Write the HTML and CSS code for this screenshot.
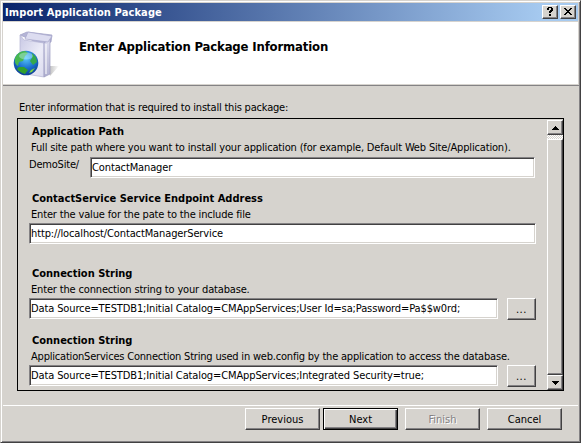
FILE: index.html
```html
<!DOCTYPE html>
<html lang="en">
<head>
<meta charset="utf-8">
<title>Import Application Package</title>
<link rel="stylesheet" href="styles.css">
</head>
<body>
<div class="window">
  <header class="titlebar">
    <span class="title">Import Application Package</span>
    <button class="caption" aria-label="Help"><svg width="12" height="10" viewBox="0 0 12 10" shape-rendering="crispEdges"><path d="M4 0h4v1h1v3h-1v1h-1v1h-2v-2h1v-1h1v-2h-2v2h-2v-2h1zM5 7h2v2h-2z"/></svg></button>
    <button class="caption close" aria-label="Close"><svg width="12" height="10" viewBox="0 0 12 10" shape-rendering="crispEdges"><path d="M2 1h2v1h1v1h2v-1h1v-1h2v1h-1v1h-1v1h-1v1h1v1h1v1h1v1h-2v-1h-1v-1h-2v1h-1v1h-2v-1h1v-1h1v-1h1v-1h-1v-1h-1v-1h-1z"/></svg></button>
  </header>
  <div class="banner">
    <svg class="logo" width="48" height="50" viewBox="0 0 48 50">
      <defs>
        <linearGradient id="front" x1="0" y1="0" x2="1" y2="1"><stop offset="0" stop-color="#c8c8e4"/><stop offset=".6" stop-color="#ececf8"/><stop offset="1" stop-color="#dadaee"/></linearGradient>
        <linearGradient id="side" x1="0" y1="0" x2="0" y2="1"><stop offset="0" stop-color="#dedef0"/><stop offset="1" stop-color="#b0b0d0"/></linearGradient>
        <radialGradient id="sea" cx=".5" cy=".3" r=".75"><stop offset="0" stop-color="#58c8f8"/><stop offset=".55" stop-color="#1b6fce"/><stop offset="1" stop-color="#0b3588"/></radialGradient>
        <linearGradient id="shade"><stop offset="0" stop-color="#999" stop-opacity=".7"/><stop offset="1" stop-color="#999" stop-opacity="0"/></linearGradient>
      </defs>
      <path d="M37 45L46 35L35 35Z" fill="url(#shade)"/>
      <path d="M7 4L14 1L39 4L38 11L30 14Z" fill="#b4b4d6" stroke="#a0a0c6" stroke-width=".7"/>
      <path d="M7 4L11 9L31 12V46L7 42Z" fill="url(#front)" stroke="#b4b4d4" stroke-width=".7"/>
      <path d="M31 12L37 8V43L31 46Z" fill="url(#side)" stroke="#9c9cc0" stroke-width=".7"/>
      <path d="M15 1L39 5L35 11L12 8Z" fill="#dcdcf0" stroke="#a8a8cc" stroke-width=".7"/>
      <path d="M33 13v30" stroke="#fff" stroke-width="1.500" opacity=".7"/>
      <circle cx="13" cy="32" r="12.300" fill="url(#sea)"/>
      <path d="M2 27Q5 20 12 20L15 22L12 25L10 30L6 31L5 35Q1 33 2 27Z" fill="#48b850"/>
      <path d="M6 36L11 36L15 39L12 43Q6 41 4 38Z" fill="#32a02c"/>
      <path d="M19 22L23 26L24 31L20 34L17 30L19 27Z" fill="#35a84c"/>
      <path d="M18 39L22 37L19 41L16 42Z" fill="#7bd440"/>
      <ellipse cx="13" cy="25" rx="7" ry="3.500" fill="#c8f4ff" opacity=".4"/>
    </svg>
    <h1>Enter Application Package Information</h1>
  </div>
  <main class="content">
    <p class="intro">Enter information that is required to install this package:</p>
    <div class="panel">
      <div class="fields">
        <section class="field">
          <h2>Application Path</h2>
          <p>Full site path where you want to install your application (for example, Default Web Site/Application).</p>
          <div class="row path-row"><label>DemoSite/</label><div class="input">ContactManager</div></div>
        </section>
        <section class="field endpoint">
          <h2>ContactService Service Endpoint Address</h2>
          <p>Enter the value for the pate to the include file</p>
          <div class="row"><div class="input">http://localhost/ContactManagerService</div></div>
        </section>
        <section class="field">
          <h2>Connection String</h2>
          <p>Enter the connection string to your database.</p>
          <div class="row"><div class="input">Data Source=TESTDB1;Initial Catalog=CMAppServices;User Id=sa;Password=Pa$$w0rd;</div><button class="btn more">...</button></div>
        </section>
        <section class="field">
          <h2>Connection String</h2>
          <p class="tight">ApplicationServices Connection String used in web.config by the application to access the database.</p>
          <div class="row"><div class="input">Data Source=TESTDB1;Initial Catalog=CMAppServices;Integrated Security=true;</div><button class="btn more">...</button></div>
        </section>
      </div>
      <div class="scrollbar">
        <div class="arrow"><svg width="7" height="4" viewBox="0 0 7 4" shape-rendering="crispEdges"><path d="M3 0h1v1h1v1h1v1h1v1H0v-1h1v-1h1v-1h1z"/></svg></div>
        <div class="track"></div>
        <div class="thumb"></div>
        <div class="arrow"><svg width="7" height="4" viewBox="0 0 7 4" shape-rendering="crispEdges"><path d="M0 0h7v1h-1v1h-1v1h-1v1h-1v-1h-1v-1h-1v-1h-1z"/></svg></div>
      </div>
    </div>
  </main>
  <footer class="footer">
    <button class="btn">Previous</button>
    <button class="btn default">Next</button>
    <button class="btn disabled" disabled>Finish</button>
    <button class="btn">Cancel</button>
  </footer>
</div>
</body>
</html>
```
FILE: styles.css
```css
* { box-sizing: border-box; }

body {
  margin: 0;
  font: 11px/16px "DejaVu Sans Condensed", "DejaVu Sans", sans-serif;
  color: #000;
  background: #d6d3ce;
}

h1, h2, p { margin: 0; white-space: nowrap; }

.window {
  display: flex;
  flex-direction: column;
  width: 581px;
  height: 443px;
  padding: 2px 1px 1px 2px;
  background: #d6d3ce;
  border: 1px solid;
  border-color: #d6d3ce #424142 #424142 #d6d3ce;
  box-shadow: inset 1px 1px #fff, inset -1px -1px #848284;
}

.titlebar {
  display: flex;
  align-items: center;
  width: 575px;
  height: 18px;
  padding: 0 2px;
  background: linear-gradient(90deg, #0a246a, #a6caf0 94%);
}

.title {
  flex: 1;
  padding-top: 1px;
  font-weight: bold;
  color: #fff;
  letter-spacing: .11px;
  white-space: nowrap;
}

.caption {
  display: flex;
  justify-content: center;
  align-items: center;
  width: 16px;
  height: 14px;
  padding: 0;
  background: #d6d3ce;
  border: 1px solid;
  border-color: #fff #424142 #424142 #fff;
  box-shadow: inset -1px -1px #848284;
}

.close { margin-left: 2px; }

.banner {
  display: flex;
  width: 575px;
  height: 63px;
  margin-top: 1px;
  padding: 8px 0 0 10px;
  background: #fff;
  border-bottom: 1px solid #d6d3ce;
}

.logo { margin-top: 1px; }

h1 {
  margin: 9px 0 0 18px;
  font-size: 13px;
  line-height: 16px;
  letter-spacing: -.16px;
}

.content {
  height: 320px;
  padding: 14px 0 0 14px;
  border-top: 1px solid #848284;
}

.intro {
  padding-left: 2px;
  letter-spacing: -.2px;
}

.panel {
  display: flex;
  justify-content: space-between;
  width: 547px;
  height: 273px;
  margin-top: 2px;
  border: 1px solid #000;
}

.fields {
  width: 518px;
  padding: 5px 0 0 11px;
}

.field { height: 67px; }
.endpoint { height: 75px; }

.field h2 {
  padding-left: 3px;
  font-size: 11px;
  line-height: 16px;
}

.field p {
  padding-left: 2px;
  letter-spacing: -.16px;
}

.field .tight { letter-spacing: -.2px; }

.row {
  display: flex;
  gap: 9px;
}

.input {
  flex: 1;
  height: 21px;
  padding: 1px 0 0 1px;
  overflow: hidden;
  line-height: 17px;
  letter-spacing: -.12px;
  white-space: nowrap;
  background: #fff;
  border: 1px solid;
  border-color: #848284 #fff #fff #848284;
  box-shadow: inset 1px 1px #424142, inset -1px -1px #d6d3ce;
}

.path-row {
  gap: 0;
  margin-top: 1px;
  padding-right: 1px;
}

.path-row label {
  width: 61px;
  letter-spacing: -.2px;
}

.btn {
  width: 75px;
  height: 22px;
  padding: 0;
  font: inherit;
  line-height: 19px;
  color: #000;
  background: #d6d3ce;
  border: 1px solid;
  border-color: #fff #424142 #424142 #fff;
  box-shadow: inset -1px -1px #848284;
}

.more { width: 29px; letter-spacing: .6px; }

.default {
  border-color: #000;
  box-shadow: inset 1px 1px #fff, inset -1px -1px #424142, inset -2px -2px #848284;
}

.disabled {
  color: #848284;
  text-shadow: 1px 1px #fff;
}

.scrollbar {
  display: flex;
  flex-direction: column;
  width: 16px;
  padding-top: 1px;
}

.arrow {
  display: flex;
  justify-content: center;
  align-items: center;
  height: 15px;
  background: #d6d3ce;
  border: 1px solid;
  border-color: #fff #424142 #424142 #fff;
  box-shadow: inset -1px -1px #848284;
}

.track {
  height: 4px;
  background: repeating-conic-gradient(#fff 0 25%, #d6d3ce 0 50%) 0 0 / 2px 2px;
}

.thumb {
  flex: 1;
  border: 1px solid;
  border-color: #fff #424142 #424142 #fff;
  box-shadow: inset -1px -1px #848284;
}

.footer {
  display: flex;
  gap: 3px;
  width: 575px;
  padding: 2px 0 0 242px;
  border-top: 1px solid #fff;
}

.footer .btn:nth-child(n+3) { margin-left: 4px; }
```
